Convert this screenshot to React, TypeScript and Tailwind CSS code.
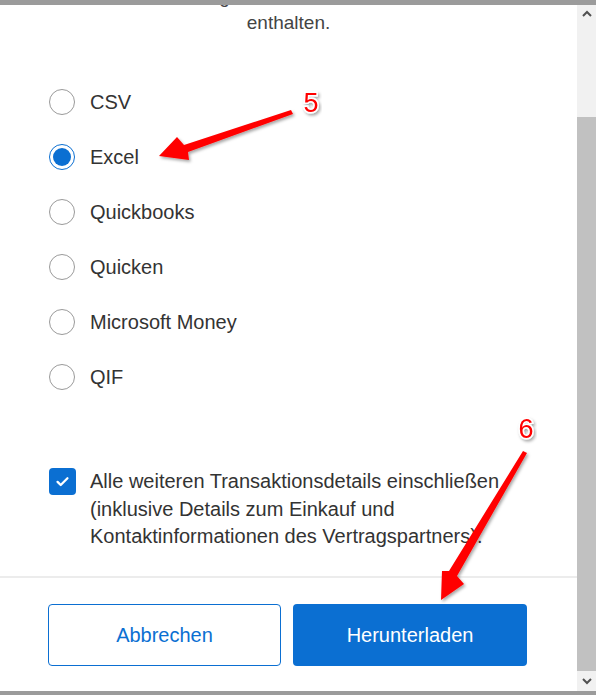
import React from 'react';

const formats = ['CSV', 'Excel', 'Quickbooks', 'Quicken', 'Microsoft Money', 'QIF'];

function Radio({ checked }: { checked: boolean }) {
  if (checked) {
    return (
      <span className="flex h-[26px] w-[26px] shrink-0 items-center justify-center rounded-full border border-[#0b6fd2] bg-white">
        <span className="h-[18px] w-[18px] rounded-full bg-[#0b6fd2]" />
      </span>
    );
  }
  return <span className="h-[26px] w-[26px] shrink-0 rounded-full border border-[#9a9a9a] bg-white" />;
}

function Annotations() {
  return (
    <svg className="pointer-events-none absolute left-0 top-0" width="596" height="695" viewBox="0 0 596 695">
      <defs>
        <filter id="shadow" x="-20%" y="-20%" width="140%" height="140%">
          <feDropShadow dx="1.5" dy="2" stdDeviation="1.5" floodColor="#000" floodOpacity="0.35" />
        </filter>
      </defs>
      {/* arrow 5 */}
      <polygon
        points="291,110 184,145 177,137 159,156 189,160 188,152 293,114"
        fill="#ff0000"
        filter="url(#shadow)"
      />
      {/* arrow 6 */}
      <polygon
        points="523,451 527,453 457,576 464,584 441,600 442,571 449,571"
        fill="#ff0000"
        filter="url(#shadow)"
      />
      <text
        x="311"
        y="112"
        textAnchor="middle"
        fontSize="27"
        fontFamily="'Liberation Sans', Arial, sans-serif"
        fill="#ff0000"
        stroke="#ffffff"
        strokeWidth="3"
        paintOrder="stroke"
        filter="url(#shadow)"
      >
        5
      </text>
      <text
        x="526"
        y="438"
        textAnchor="middle"
        fontSize="27"
        fontFamily="'Liberation Sans', Arial, sans-serif"
        fill="#ff0000"
        stroke="#ffffff"
        strokeWidth="3"
        paintOrder="stroke"
        filter="url(#shadow)"
      >
        6
      </text>
    </svg>
  );
}

export default function App() {
  return (
    <div className="relative flex h-[695px] w-[596px] flex-col overflow-hidden bg-white font-['Liberation_Sans',Arial,sans-serif] text-[#333]">
      {/* top edge */}
      <div className="h-[5px] shrink-0 bg-[#9b9b9b]" />

      <div className="flex min-h-0 flex-1">
        {/* dialog body */}
        <div className="flex min-w-0 flex-1 flex-col">
          <div className="min-h-0 flex-1 overflow-hidden">
            <p className="mt-[-21px] text-center text-[19px] leading-[26px] text-[#444]">
              Die Datei wird die gewählten Umsätze des Zeitraums
              <br />
              enthalten.
            </p>

            <div className="mt-[53px] flex flex-col gap-[29px] pl-[49px]">
              {formats.map((f) => (
                <label key={f} className="flex h-[26px] items-center gap-[15px]">
                  <Radio checked={f === 'Excel'} />
                  <span className="text-[20px] leading-none">{f}</span>
                </label>
              ))}
            </div>

            <label className="mt-[78px] flex items-start gap-[14px] pl-[49px]">
              <span className="flex h-[27px] w-[27px] shrink-0 items-center justify-center rounded-[4px] bg-[#0b6fd2]">
                <svg width="17" height="17" viewBox="0 0 24 24" fill="none" stroke="#fff" strokeWidth="3.2" strokeLinecap="round" strokeLinejoin="round">
                  <path d="M5 12.5l4.5 4.5L19 7.5" />
                </svg>
              </span>
              <span className="text-[20px] leading-[27.5px]">
                Alle weiteren Transaktionsdetails einschließen
                <br />
                (inklusive Details zum Einkauf und
                <br />
                Kontaktinformationen des Vertragspartners).
              </span>
            </label>
          </div>

          {/* footer */}
          <div className="shrink-0 border-t-2 border-[#ececec] pb-[25px] pl-[48px] pt-[26px]">
            <div className="flex gap-[12px]">
              <button className="h-[62px] w-[233px] rounded-[4px] border border-[#0b6fd2] bg-white text-[20px] text-[#0b6fd2]">
                Abbrechen
              </button>
              <button className="h-[62px] w-[234px] rounded-[4px] bg-[#0b6fd2] text-[20px] text-white">
                Herunterladen
              </button>
            </div>
          </div>
        </div>

        {/* scrollbar */}
        <div className="flex w-[19px] shrink-0 flex-col bg-[#f1f1f1]">
          <div className="flex h-[17px] items-center justify-center">
            <svg width="10" height="7" viewBox="0 0 10 7">
              <path d="M1 6L5 2l4 4" fill="none" stroke="#505050" strokeWidth="2" />
            </svg>
          </div>
          <div className="mt-[95px] flex-1 bg-[#c1c1c1]" />
          <div className="flex h-[20px] items-center justify-center">
            <svg width="10" height="7" viewBox="0 0 10 7">
              <path d="M1 1l4 4 4-4" fill="none" stroke="#505050" strokeWidth="2" />
            </svg>
          </div>
        </div>
      </div>

      {/* bottom edge */}
      <div className="h-[4px] shrink-0 bg-[#9b9b9b]" />

      <Annotations />
    </div>
  );
}
